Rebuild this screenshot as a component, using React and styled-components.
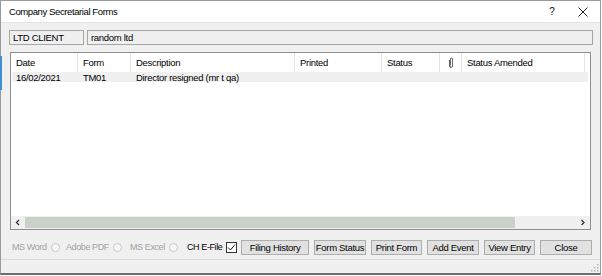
import React from "react";
import styled, { createGlobalStyle } from "styled-components";

const Global = createGlobalStyle`
  html, body { margin: 0; padding: 0; background: #ffffff; }
  body { font-family: "Liberation Sans", Arial, sans-serif; font-size: 9.5px; letter-spacing: -0.3px; color: #000; }
  * { box-sizing: border-box; }
`;

const Screen = styled.div`
  width: 602px;
  height: 276px;
  position: relative;
  overflow: hidden;
  background: #ffffff;
`;

const BehindStrip = styled.div`
  position: absolute;
  left: 0;
  top: 56px;
  width: 2px;
  height: 34px;
  background: #3f8fd0;
`;

const Window = styled.div`
  width: 601px;
  height: 275px;
  border: 1px solid #9a9a9a;
  border-bottom: 2px solid #6e6e6e;
  background: #f0f0f0;
  display: flex;
  flex-direction: column;
`;

const TitleBar = styled.div`
  height: 22px;
  background: #ffffff;
  border-bottom: 1px solid #e3e3e3;
  display: flex;
  align-items: center;
  padding-left: 8px;
  padding-right: 1px;
`;

const Title = styled.div`
  flex: 1;
  font-size: 9.5px;
  letter-spacing: -0.4px;
  color: #000;
`;

const TitleButton = styled.div`
  width: ${(p) => p.$w}px;
  height: 22px;
  display: flex;
  align-items: center;
  justify-content: center;
  font-size: 10px;
  color: #111;
`;

const Body = styled.div`
  flex: 1;
  display: flex;
  flex-direction: column;
  padding: 7px 7px 0 7px;
`;

const FieldRow = styled.div`
  display: flex;
  gap: 3px;
  height: 15px;
  padding-left: 1px;
`;

const Field = styled.div`
  width: ${(p) => (p.$w ? `${p.$w}px` : "auto")};
  flex: ${(p) => (p.$w ? "none" : 1)};
  border: 1px solid #a6a6a6;
  background: #f0f0f0;
  display: flex;
  align-items: center;
  padding-left: 3px;
  white-space: nowrap;
`;

const List = styled.div`
  margin: 7px 2px 0 2px;
  height: 178px;
  border: 1px solid #8e8f8f;
  background: #ffffff;
  display: flex;
  flex-direction: column;
  overflow: hidden;
`;

const Grid = styled.div`
  display: grid;
  grid-template-columns: 67px 53px 164px 87px 58px 22px 123px 1fr;
`;

const HeadCell = styled.div`
  height: 19px;
  display: flex;
  align-items: center;
  justify-content: ${(p) => (p.$center ? "center" : "flex-start")};
  padding-left: ${(p) => (p.$center ? 0 : 5)}px;
  border-right: ${(p) => (p.$last ? "none" : "1px solid #e5e5e5")};
  white-space: nowrap;
  overflow: hidden;
`;

const DataRow = styled.div`
  display: grid;
  grid-template-columns: 67px 53px 164px 1fr;
  margin: 0 2px 0 1px;
  height: 10px;
  background: #f0f0f0;
`;

const DataCell = styled.div`
  display: flex;
  align-items: center;
  padding-left: 4px;
  white-space: nowrap;
`;

const Spacer = styled.div`
  flex: 1;
`;

const HScroll = styled.div`
  height: 13px;
  display: flex;
  align-items: stretch;
  background: #f0f0f0;
`;

const ScrollArrow = styled.div`
  width: 14px;
  display: flex;
  align-items: center;
  justify-content: center;
`;

const Track = styled.div`
  flex: 1;
  display: flex;
  padding: 1px 0;
`;

const Thumb = styled.div`
  width: 490px;
  background: #c9d1c9;
`;

const BottomRow = styled.div`
  display: flex;
  align-items: center;
  height: 16px;
  margin-top: 9px;
  padding-left: 4px;
`;

const Option = styled.div`
  width: ${(p) => p.$w}px;
  flex: none;
  display: flex;
  align-items: center;
  gap: 4px;
  font-size: 9px;
  letter-spacing: -0.4px;
  color: ${(p) => (p.$disabled ? "#a2a2a2" : "#000")};
  white-space: nowrap;
`;

const Radio = styled.span`
  width: 9px;
  height: 9px;
  border-radius: 50%;
  border: 1px solid #c9c9c9;
  background: #f7f7f7;
  display: inline-block;
  flex: none;
`;

const Check = styled.span`
  width: 11px;
  height: 11px;
  border: 1px solid #333;
  background: #fff;
  display: inline-flex;
  align-items: center;
  justify-content: center;
  flex: none;
`;

const Buttons = styled.div`
  display: flex;
  gap: 5px;
`;

const Button = styled.div`
  width: ${(p) => p.$w}px;
  height: 15px;
  border: 1px solid #adadad;
  background: #e1e1e1;
  display: flex;
  align-items: center;
  justify-content: center;
  white-space: nowrap;
  flex: none;
`;

const StatusBar = styled.div`
  margin-top: 4px;
  margin-left: -7px;
  margin-right: -7px;
  flex: 1;
  border-top: 1px solid #dadada;
  display: flex;
  justify-content: flex-end;
  align-items: flex-end;
`;

function Clip() {
  return (
    <svg width="6" height="11" viewBox="0 0 6 11">
      <path d="M1.5 3 V9 A1.5 1.5 0 0 0 4.5 9 V2 A1 1 0 0 0 2.5 2 V8" fill="none" stroke="#555" strokeWidth="0.9" />
      <path d="M2.5 8.5 V10" stroke="#3a9a3a" strokeWidth="1" />
    </svg>
  );
}

function Grip() {
  return (
    <svg width="10" height="10" viewBox="0 0 10 10">
      <g fill="#b5b5b5">
        <rect x="7" y="7" width="1.5" height="1.5" />
        <rect x="4" y="7" width="1.5" height="1.5" />
        <rect x="7" y="4" width="1.5" height="1.5" />
        <rect x="1" y="7" width="1.5" height="1.5" />
        <rect x="4" y="4" width="1.5" height="1.5" />
        <rect x="7" y="1" width="1.5" height="1.5" />
      </g>
    </svg>
  );
}

function CheckMark() {
  return (
    <svg width="9" height="9" viewBox="0 0 9 9">
      <path d="M1 4.5 L3.5 7 L8 1.5" fill="none" stroke="#222" strokeWidth="1" />
    </svg>
  );
}

function CloseX() {
  return (
    <svg width="10" height="10" viewBox="0 0 10 10">
      <path d="M0.5 0.5 L9.5 9.5 M9.5 0.5 L0.5 9.5" stroke="#222" strokeWidth="1" />
    </svg>
  );
}

function Chevron({ dir }) {
  const d = dir === "left" ? "M4 1 L1.5 3.5 L4 6" : "M1.5 1 L4 3.5 L1.5 6";
  return (
    <svg width="6" height="7" viewBox="0 0 6 7">
      <path d={d} fill="none" stroke="#333" strokeWidth="1.3" />
    </svg>
  );
}

const headers = ["Date", "Form", "Description", "Printed", "Status", null, "Status Amended", "S"];

export default function App() {
  return (
    <Screen>
      <Global />
      <Window>
        <TitleBar>
          <Title>Company Secretarial Forms</Title>
          <TitleButton $w={30}>?</TitleButton>
          <TitleButton $w={32}>
            <CloseX />
          </TitleButton>
        </TitleBar>
        <Body>
          <FieldRow>
            <Field $w={75}>LTD CLIENT</Field>
            <Field>random ltd</Field>
          </FieldRow>
          <List>
            <Grid>
              {headers.map((h, i) =>
                h === null ? (
                  <HeadCell key={i} $center>
                    <Clip />
                  </HeadCell>
                ) : (
                  <HeadCell key={i} $last={i === headers.length - 1}>
                    {h}
                  </HeadCell>
                )
              )}
            </Grid>
            <DataRow>
              <DataCell>16/02/2021</DataCell>
              <DataCell>TM01</DataCell>
              <DataCell>Director resigned (mr t qa)</DataCell>
              <DataCell />
            </DataRow>
            <Spacer />
            <HScroll>
              <ScrollArrow>
                <Chevron dir="left" />
              </ScrollArrow>
              <Track>
                <Thumb />
              </Track>
              <ScrollArrow>
                <Chevron dir="right" />
              </ScrollArrow>
            </HScroll>
          </List>
          <BottomRow>
            <Option $disabled $w={54}>
              MS Word <Radio />
            </Option>
            <Option $disabled $w={64}>
              Adobe PDF <Radio />
            </Option>
            <Option $disabled $w={57}>
              MS Excel <Radio />
            </Option>
            <Option $w={54}>
              CH E-File
              <Check>
                <CheckMark />
              </Check>
            </Option>
            <Buttons>
              <Button $w={68}>Filing History</Button>
              <Button $w={52}>Form Status</Button>
              <Button $w={51}>Print Form</Button>
              <Button $w={52}>Add Event</Button>
              <Button $w={51}>View Entry</Button>
              <Button $w={52}>Close</Button>
            </Buttons>
          </BottomRow>
          <StatusBar>
            <Grip />
          </StatusBar>
        </Body>
      </Window>
      <BehindStrip />
    </Screen>
  );
}
